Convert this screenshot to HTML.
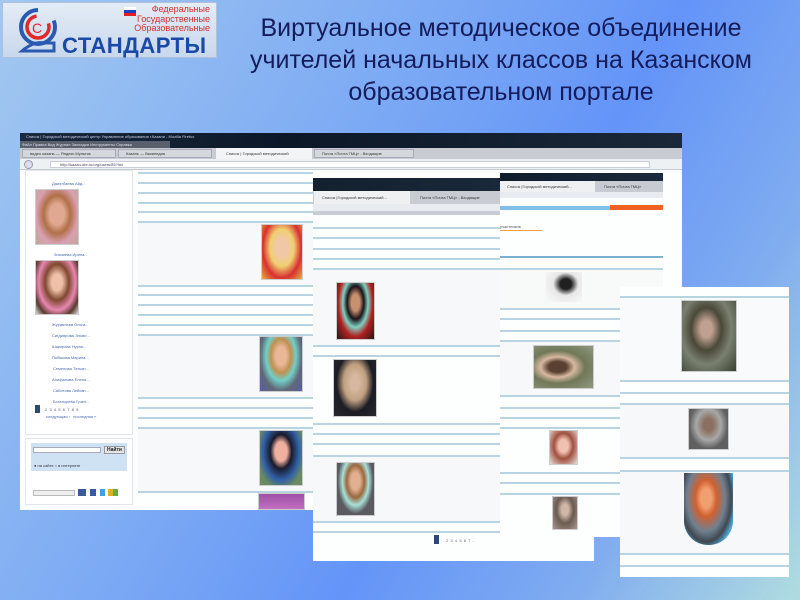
<!DOCTYPE html>
<html><head><meta charset="utf-8">
<style>
*{margin:0;padding:0;box-sizing:border-box}
body{width:800px;height:600px;overflow:hidden;position:relative;font-family:"Liberation Sans","Noto Sans CJK SC",sans-serif;
background:linear-gradient(120deg,#a2c8f0 0%,#7aa8f4 40%,#6494f8 60%,#80acf0 80%,#b0dce0 100%);}
.a{position:absolute}
.ln{position:absolute;height:2px;background:#b8d4e0}
.ph{position:absolute;border:1px solid #ccc}
.t{position:absolute;font-size:4px;color:#4a6ab0;white-space:nowrap}
</style></head><body>

<!-- logo -->
<div class="a" style="left:2px;top:2px;width:215px;height:56px;background:linear-gradient(#e4ecf6,#c8d8ec);border:1px solid #b0c0d8"></div>
<svg class="a" style="left:14px;top:5px" width="50" height="50" viewBox="0 0 50 50">
<circle cx="24" cy="22" r="17" fill="none" stroke="#2a5ab0" stroke-width="4" stroke-dasharray="80 20"/>
<circle cx="24" cy="22" r="11" fill="none" stroke="#e02828" stroke-width="3.5" stroke-dasharray="50 15"/>
<text x="18" y="28" font-size="14" fill="#e02828" font-family="Liberation Sans">C</text>
<path d="M8 46 Q20 36 30 38 L40 38 L40 46 Z" fill="none" stroke="#2a5ab0" stroke-width="3"/>
</svg>
<div class="a" style="left:124px;top:7px;width:12px;height:3px;background:#fff"></div>
<div class="a" style="left:124px;top:10px;width:12px;height:3px;background:#2040c0"></div>
<div class="a" style="left:124px;top:13px;width:12px;height:3px;background:#e02020"></div>
<div class="a" style="left:120px;top:5px;font-size:9px;line-height:9.5px;color:#d03030;text-align:right;width:90px">Федеральные<br>Государственные<br>Образовательные</div>
<div class="a" style="left:62px;top:33px;font-size:22px;font-weight:bold;color:#1a4aa8;letter-spacing:0.5px">СТАНДАРТЫ</div>

<!-- title -->
<div class="a" style="left:220px;top:12px;width:562px;text-align:center;font-size:25px;line-height:32px;color:#141c5c">Виртуальное методическое объединение<br>учителей начальных классов на Казанском<br>образовательном портале</div>

<!-- screen 1 -->
<div class="a" style="left:20px;top:133px;width:662px;height:377px;background:#fdfefe"></div>
<div class="a" style="left:20px;top:133px;width:662px;height:15px;background:linear-gradient(90deg,#1a2a40,#0c1828 40%,#1a2838)"></div>
<div class="t" style="left:26px;top:134px;color:#ccd">Список | Городской методический центр Управление образования г.Казани - Mozilla Firefox</div>
<div class="a" style="left:20px;top:141px;width:150px;height:7px;background:#59606c"></div>
<div class="t" style="left:22px;top:142px;color:#dde">Файл Правка Вид Журнал Закладки Инструменты Справка</div>
<div class="a" style="left:20px;top:148px;width:662px;height:11px;background:#c8ccd2"></div>
<div class="a" style="left:22px;top:149px;width:94px;height:9px;background:#d4d8dc;border:1px solid #aab"></div>
<div class="a" style="left:118px;top:149px;width:94px;height:9px;background:#d4d8dc;border:1px solid #aab"></div>
<div class="a" style="left:216px;top:148px;width:96px;height:11px;background:#f2f4f6"></div>
<div class="a" style="left:314px;top:149px;width:100px;height:9px;background:#d4d8dc;border:1px solid #aab"></div>
<div class="t" style="left:30px;top:151px;color:#333">видео казань — Яндекс.Мультик</div>
<div class="t" style="left:126px;top:151px;color:#333">Казань — Википедия</div>
<div class="t" style="left:226px;top:151px;color:#333">Список | Городской методический</div>
<div class="t" style="left:322px;top:151px;color:#333">Почта «Почта ГМЦ» - Входящие</div>
<div class="a" style="left:20px;top:159px;width:662px;height:11px;background:#eef1f4;border-bottom:1px solid #c4ccd4"></div>
<div class="a" style="left:24px;top:160px;width:9px;height:9px;border-radius:50%;background:#dde;border:1px solid #99a"></div>
<div class="a" style="left:50px;top:161px;width:600px;height:7px;background:#fff;border:1px solid #ccd"></div>
<div class="t" style="left:60px;top:162px;color:#445">http://kazan-obr.ru/org/users/85?list</div>
<div class="a" style="left:25px;top:170px;width:108px;height:265px;border:1px solid #e2e6ea;background:#fff"></div>
<div class="a" style="left:25px;top:438px;width:108px;height:67px;border:1px solid #e2e6ea;background:#fff"></div>
<div class="t" style="left:52px;top:181px">Даиэтбаева Айд...</div>
<div class="ph" style="left:35px;top:189px;width:44px;height:56px;background:radial-gradient(ellipse at 50% 45%,#e0a890 25%,#b07048 45%,#d8a0b0 70%,#c0a898)"></div>
<div class="t" style="left:54px;top:252px">Зиязиева Ирина...</div>
<div class="ph" style="left:35px;top:260px;width:44px;height:55px;background:radial-gradient(ellipse at 50% 40%,#f0c0a8 18%,#804830 40%,#e888b0 62%,#5a3a30 80%,#ddd)"></div>
<div class="t" style="left:52px;top:322px">Журавлева Ольга...</div>
<div class="t" style="left:52px;top:333px">Сигдиярова Эльви...</div>
<div class="t" style="left:52px;top:344px">Шакирова Нурзи...</div>
<div class="t" style="left:52px;top:355px">Побякова Марина...</div>
<div class="t" style="left:53px;top:366px">Семенова Татьян...</div>
<div class="t" style="left:52px;top:377px">Алифанова Елена...</div>
<div class="t" style="left:53px;top:388px">Сабитова Лейсан...</div>
<div class="t" style="left:53px;top:399px">Богатырева Гузел...</div>
<div class="a" style="left:35px;top:405px;width:5px;height:8px;background:#2a4a70"></div>
<div class="t" style="left:45px;top:407px;color:#557">2 &nbsp;3 &nbsp;4 &nbsp;5 &nbsp;6 &nbsp;7 &nbsp;8 &nbsp;9</div>
<div class="t" style="left:46px;top:414px">следующая › &nbsp; последняя »</div>
<div class="a" style="left:31px;top:443px;width:96px;height:28px;background:#cfe2f4"></div>
<div class="a" style="left:33px;top:447px;width:68px;height:6px;background:#fff;border:1px solid #aab"></div>
<div class="a" style="left:104px;top:446px;width:21px;height:8px;background:#e4e6ea;border:1px solid #999;font-size:5px;font-weight:bold;text-align:center;color:#222">Найти</div>
<div class="t" style="left:34px;top:463px;color:#334">● на сайте ○ в интернете</div>
<div class="a" style="left:33px;top:490px;width:42px;height:6px;background:#eee;border:1px solid #bbb"></div>
<div class="a" style="left:78px;top:489px;width:40px;height:7px;background:linear-gradient(90deg,#3a5a9a 20%,transparent 20%,transparent 30%,#3a5aa0 30%,#3a5aa0 45%,transparent 45%,transparent 55%,#40a0e0 55%,#40a0e0 68%,transparent 68%,transparent 75%,#e0b020 75%,#e0b020 87%,#60b040 87%)"></div>

<!-- screen1 main lines -->
<div class="ln" style="left:138px;top:172px;width:175px"></div>
<div class="ln" style="left:138px;top:182px;width:175px"></div>
<div class="ln" style="left:138px;top:192px;width:175px"></div>
<div class="ln" style="left:138px;top:202px;width:175px"></div>
<div class="ln" style="left:138px;top:211px;width:175px"></div>
<div class="ln" style="left:138px;top:221px;width:175px"></div>
<div class="a" style="left:138px;top:223px;width:175px;height:62px;background:#f6f8f9"></div>
<div class="ln" style="left:138px;top:285px;width:175px"></div>
<div class="ln" style="left:138px;top:294px;width:175px"></div>
<div class="ln" style="left:138px;top:304px;width:175px"></div>
<div class="ln" style="left:138px;top:314px;width:175px"></div>
<div class="ln" style="left:138px;top:324px;width:175px"></div>
<div class="ln" style="left:138px;top:334px;width:175px"></div>
<div class="a" style="left:138px;top:336px;width:175px;height:61px;background:#f6f8f9"></div>
<div class="ln" style="left:138px;top:397px;width:175px"></div>
<div class="ln" style="left:138px;top:407px;width:175px"></div>
<div class="ln" style="left:138px;top:417px;width:175px"></div>
<div class="ln" style="left:138px;top:427px;width:175px"></div>
<div class="a" style="left:138px;top:429px;width:175px;height:62px;background:#f6f8f9"></div>
<div class="ln" style="left:138px;top:491px;width:175px"></div>
<div class="ph" style="left:261px;top:224px;width:42px;height:56px;background:radial-gradient(ellipse at 50% 42%,#f0c8a8 20%,#f0d070 42%,#d83030 68%,#e8b040)"></div>
<div class="ph" style="left:259px;top:336px;width:44px;height:56px;background:radial-gradient(ellipse at 50% 35%,#e8b898 18%,#c09050 34%,#70d0c8 50%,#606878 70%,#5860a0)"></div>
<div class="ph" style="left:259px;top:430px;width:44px;height:56px;background:radial-gradient(ellipse at 50% 38%,#f0b0a0 20%,#1a1a2a 36%,#3060a8 60%,#6a8a60 80%)"></div>
<div class="ph" style="left:258px;top:493px;width:47px;height:17px;background:linear-gradient(#a050a8,#c070c0)"></div>

<!-- screen 2 -->
<div class="a" style="left:313px;top:178px;width:281px;height:383px;background:#fdfefe"></div>
<div class="a" style="left:313px;top:178px;width:281px;height:13px;background:linear-gradient(90deg,#14202e,#1c2c40)"></div>
<div class="a" style="left:313px;top:191px;width:281px;height:13px;background:#c8ccd2"></div>
<div class="a" style="left:314px;top:191px;width:96px;height:13px;background:#eef0f2"></div>
<div class="t" style="left:322px;top:195px;color:#333">Список |Городской методический...</div>
<div class="t" style="left:420px;top:195px;color:#333">Почта «Почта ГМЦ» - Входящие</div>
<div class="a" style="left:313px;top:204px;width:281px;height:10px;background:#e8ecf0"></div>
<div class="a" style="left:313px;top:211px;width:281px;height:4px;background:#c8ccd4"></div>
<div class="ln" style="left:313px;top:227px;width:200px"></div>
<div class="ln" style="left:313px;top:237px;width:200px"></div>
<div class="ln" style="left:313px;top:248px;width:200px"></div>
<div class="ln" style="left:313px;top:258px;width:200px"></div>
<div class="ln" style="left:313px;top:268px;width:200px"></div>
<div class="a" style="left:313px;top:270px;width:200px;height:75px;background:#f6f8f9"></div>
<div class="ln" style="left:313px;top:345px;width:200px"></div>
<div class="ln" style="left:313px;top:355px;width:200px"></div>
<div class="ln" style="left:313px;top:423px;width:200px"></div>
<div class="ln" style="left:313px;top:433px;width:200px"></div>
<div class="ln" style="left:313px;top:443px;width:200px"></div>
<div class="ln" style="left:313px;top:455px;width:200px"></div>
<div class="a" style="left:313px;top:457px;width:200px;height:64px;background:#f6f8f9"></div>
<div class="ln" style="left:313px;top:521px;width:200px"></div>
<div class="ln" style="left:313px;top:531px;width:200px"></div>
<div class="ph" style="left:336px;top:282px;width:39px;height:58px;background:radial-gradient(ellipse at 50% 35%,#c89070 16%,#1a1418 32%,#80d0c0 48%,#b02020 66%,#201818)"></div>
<div class="ph" style="left:333px;top:359px;width:44px;height:58px;background:radial-gradient(ellipse at 50% 40%,#d8b8a0 14%,#c0a080 38%,#1c1c24 62%,#282830)"></div>
<div class="ph" style="left:336px;top:462px;width:39px;height:54px;background:radial-gradient(ellipse at 50% 35%,#e0b090 18%,#9a6840 34%,#a8e0d8 50%,#5a5a60 68%)"></div>
<div class="a" style="left:434px;top:535px;width:5px;height:9px;background:#2a4a70"></div>
<div class="t" style="left:446px;top:538px;color:#668">2 &nbsp;3 &nbsp;4 &nbsp;5 &nbsp;6 &nbsp;7 ...</div>

<!-- screen 3 -->
<div class="a" style="left:500px;top:173px;width:163px;height:364px;background:#fdfefe"></div>
<div class="a" style="left:500px;top:173px;width:163px;height:8px;background:linear-gradient(90deg,#101c2c,#1a2a3c)"></div>
<div class="a" style="left:500px;top:181px;width:163px;height:11px;background:#c8ccd2"></div>
<div class="a" style="left:500px;top:181px;width:95px;height:11px;background:#eef0f2"></div>
<div class="t" style="left:507px;top:184px;color:#333">Список |Городской методический...</div>
<div class="t" style="left:604px;top:184px;color:#333">Почта «Почта ГМЦ»</div>
<div class="a" style="left:500px;top:192px;width:163px;height:6px;background:#e8ecf0"></div>
<div class="a" style="left:500px;top:206px;width:110px;height:4px;background:#80c0e8"></div>
<div class="a" style="left:610px;top:205px;width:53px;height:5px;background:#f06020"></div>
<div class="t" style="left:500px;top:224px;color:#556">участников</div>
<div class="a" style="left:500px;top:230px;width:42px;height:1px;background:#f0a040"></div>
<div class="a" style="left:500px;top:256px;width:163px;height:2px;background:#7ab0d0"></div>
<div class="ln" style="left:500px;top:268px;width:163px"></div>
<div class="a" style="left:500px;top:270px;width:163px;height:38px;background:#f8fafa"></div>
<div class="ln" style="left:500px;top:308px;width:163px"></div>
<div class="ln" style="left:500px;top:318px;width:163px"></div>
<div class="ln" style="left:500px;top:330px;width:163px"></div>
<div class="ln" style="left:500px;top:340px;width:163px"></div>
<div class="a" style="left:500px;top:342px;width:163px;height:53px;background:#f6f8f9"></div>
<div class="ln" style="left:500px;top:395px;width:163px"></div>
<div class="ln" style="left:500px;top:407px;width:163px"></div>
<div class="ln" style="left:500px;top:417px;width:163px"></div>
<div class="ln" style="left:500px;top:427px;width:163px"></div>
<div class="ln" style="left:500px;top:472px;width:163px"></div>
<div class="ln" style="left:500px;top:482px;width:163px"></div>
<div class="ln" style="left:500px;top:493px;width:163px"></div>
<div class="ph" style="left:546px;top:272px;width:36px;height:30px;border:none;background:radial-gradient(ellipse at 55% 40%,#202020 20%,#e8e8e8 45%,#fafafa)"></div>
<div class="ph" style="left:533px;top:345px;width:61px;height:44px;background:radial-gradient(ellipse at 40% 50%,#5a4030 18%,#d8b8a0 34%,#707858 55%,#909880)"></div>
<div class="ph" style="left:549px;top:430px;width:29px;height:35px;background:radial-gradient(ellipse at 50% 45%,#f0c0b0 25%,#a05040 50%,#e8e0d8)"></div>
<div class="ph" style="left:552px;top:496px;width:26px;height:34px;background:radial-gradient(ellipse at 50% 40%,#d0b8a8 20%,#6a5a50 50%,#a89890)"></div>

<!-- screen 4 -->
<div class="a" style="left:620px;top:287px;width:169px;height:290px;background:#fdfefe"></div>
<div class="ln" style="left:620px;top:296px;width:169px"></div>
<div class="a" style="left:620px;top:298px;width:169px;height:82px;background:#f8fafb"></div>
<div class="ln" style="left:620px;top:380px;width:169px"></div>
<div class="ln" style="left:620px;top:392px;width:169px"></div>
<div class="ln" style="left:620px;top:403px;width:169px"></div>
<div class="a" style="left:620px;top:405px;width:169px;height:52px;background:#f6f8f9"></div>
<div class="ln" style="left:620px;top:457px;width:169px"></div>
<div class="ln" style="left:620px;top:470px;width:169px"></div>
<div class="a" style="left:620px;top:472px;width:169px;height:81px;background:#f6f8f9"></div>
<div class="ln" style="left:620px;top:553px;width:169px"></div>
<div class="ln" style="left:620px;top:565px;width:169px"></div>
<div class="ph" style="left:681px;top:300px;width:56px;height:72px;background:radial-gradient(ellipse at 45% 40%,#c0a090 14%,#4a4838 36%,#7a8070 60%,#3a4030)"></div>
<div class="ph" style="left:688px;top:408px;width:41px;height:42px;background:radial-gradient(ellipse at 50% 40%,#8a7060 18%,#a8a8a8 45%,#606060 70%)"></div>
<div class="ph" style="left:684px;top:473px;width:49px;height:72px;border:none;border-radius:0 0 24px 24px;background:radial-gradient(ellipse at 45% 35%,#f0a070 14%,#d06030 28%,#708090 50%,#404850 66%,#50b0e0 80%)"></div>

</body></html>
